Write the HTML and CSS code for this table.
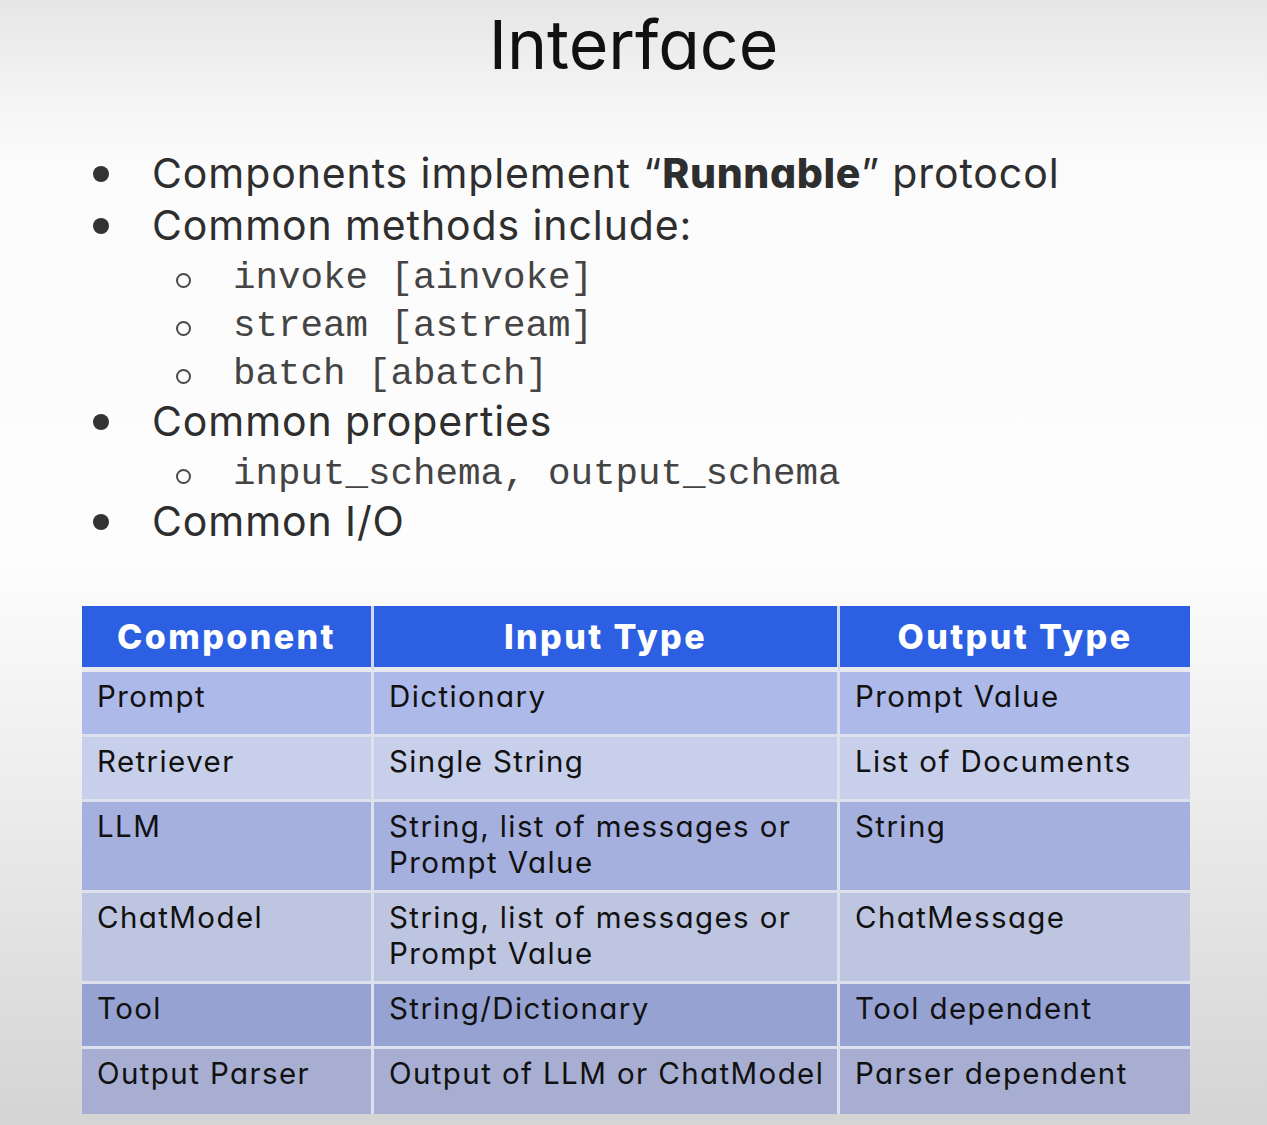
FILE: index.html
```html
<!DOCTYPE html>
<html lang="en">
<head>
<meta charset="utf-8">
<title>Interface</title>
<link rel="stylesheet" href="styles.css">
</head>
<body>
<main class="slide">
  <h1 class="title">Interface</h1>
  <ul class="bullets">
    <li class="item">Components implement “<b>Runnable</b>” protocol</li>
    <li class="item">Common methods include:
      <ul class="sub">
        <li class="code">invoke [ainvoke]</li>
        <li class="code">stream [astream]</li>
        <li class="code">batch [abatch]</li>
      </ul>
    </li>
    <li class="item">Common properties
      <ul class="sub">
        <li class="code">input_schema, output_schema</li>
      </ul>
    </li>
    <li class="item">Common I/O</li>
  </ul>
  <table class="io">
    <colgroup>
      <col class="c1"><col class="c2"><col class="c3">
    </colgroup>
    <thead>
      <tr><th>Component</th><th>Input Type</th><th>Output Type</th></tr>
    </thead>
    <tbody>
      <tr class="r1"><td>Prompt</td><td>Dictionary</td><td>Prompt Value</td></tr>
      <tr class="r2"><td>Retriever</td><td>Single String</td><td>List of Documents</td></tr>
      <tr class="r3 tall"><td>LLM</td><td>String, list of messages or<br>Prompt Value</td><td>String</td></tr>
      <tr class="r4 tall"><td>ChatModel</td><td>String, list of messages or<br>Prompt Value</td><td>ChatMessage</td></tr>
      <tr class="r5"><td>Tool</td><td>String/Dictionary</td><td>Tool dependent</td></tr>
      <tr class="r6"><td>Output Parser</td><td>Output of LLM or ChatModel</td><td>Parser dependent</td></tr>
    </tbody>
  </table>
</main>
</body>
</html>
```
FILE: styles.css
```css
html, body {
  margin: 0;
  padding: 0;
}
body {
  width: 1267px;
  height: 1125px;
  overflow: hidden;
  background: linear-gradient(to bottom, #e6e6e6 0px, #f6f6f6 110px, #fbfbfb 160px, #fdfdfd 560px, #ececec 800px, #d4d4d4 1125px);
  font-family: "Inter", "Liberation Sans", sans-serif;
  font-feature-settings: "cv11";
  color: #2e2e2e;
}
.slide {
  padding-top: 8px;
}
.title {
  margin: 0;
  text-align: center;
  font-weight: 400;
  font-size: 68px;
  line-height: 72px;
  color: #111;
}
.bullets {
  list-style: none;
  margin: 67px 0 0 0;
  padding: 0 0 0 152px;
}
.item {
  position: relative;
  font-size: 41px;
  line-height: 52px;
  letter-spacing: 0.9px;
}
.item::before {
  content: "";
  position: absolute;
  left: -59px;
  top: 19px;
  width: 16px;
  height: 16px;
  border-radius: 50%;
  background: #333;
}
.item b {
  font-weight: 800;
  letter-spacing: 0.6px;
}
.sub {
  list-style: none;
  margin: 0;
  padding: 0 0 0 81px;
}
.code {
  position: relative;
  font-family: "Liberation Mono", "Courier New", monospace;
  font-size: 37.5px;
  line-height: 42px;
  padding-top: 6px;
  letter-spacing: 0;
  color: #444;
}
.code::before {
  content: "";
  position: absolute;
  left: -57px;
  top: 22px;
  width: 11px;
  height: 11px;
  border-radius: 50%;
  border: 2px solid #4a4a4a;
}
.io {
  margin: 59px 0 0 82px;
  width: 1108px;
  border-collapse: separate;
  border-spacing: 0;
  table-layout: fixed;
}
.c1 { width: 292px; }
.c2 { width: 466px; }
.c3 { width: 350px; }
.io th {
  background: #2c5fe2;
  color: #fff;
  font-weight: 800;
  font-size: 34px;
  letter-spacing: 2.4px;
  height: 61px;
  padding: 0;
  text-align: center;
  border-right: 3px solid #cfd8f2;
  border-bottom: 5px solid #e6e9f0;
}
.io th:last-child, .io td:last-child {
  border-right: none;
}
.io td {
  vertical-align: top;
  white-space: nowrap;
  font-size: 29.5px;
  line-height: 36px;
  letter-spacing: 1.4px;
  color: #111;
  padding: 6px 0 0 15px;
  border-right: 3px solid #dde1ee;
  border-bottom: 3px solid #dde1ee;
}
.io tr:last-child td {
  border-bottom: none;
}
.io tr td { height: 56px; }
.io tr.tall td { height: 82px; }
.io tr:last-child td { height: 59px; }
.r1 td { background: #adb9e8; }
.r2 td { background: #c8cfea; }
.r3 td { background: #a5b0df; }
.r4 td { background: #bec5e0; }
.r5 td { background: #96a2d2; }
.r6 td { background: #a7aed2; }
```
